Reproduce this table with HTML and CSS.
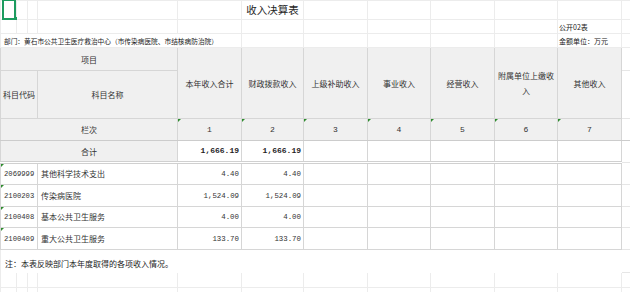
FILE: index.html
```html
<!DOCTYPE html>
<html>
<head>
<meta charset="utf-8">
<title>收入决算表</title>
<link rel="stylesheet" href="styles.css">
</head>
<body>
<table class="sheet">
  <colgroup>
    <col class="w16"><col class="w11"><col class="w10"><col class="w140">
    <col class="w64"><col class="w62"><col class="w64"><col class="w63">
    <col class="w64"><col class="w63"><col class="w64"><col class="w9">
  </colgroup>
  <tr class="h19 top">
    <td class="sel"></td><td></td><td></td><td></td><td></td>
    <td class="title">收入决算表</td>
    <td></td><td></td><td></td><td></td><td></td><td class="ext"></td>
  </tr>
  <tr class="h14 top">
    <td></td><td></td><td></td><td></td><td></td><td></td><td></td><td></td><td></td><td></td>
    <td class="small">公开02表</td><td class="ext"></td>
  </tr>
  <tr class="h14 top">
    <td colspan="5" class="dept">部门：黄石市公共卫生医疗救治中心（市传染病医院、市结核病防治院）</td>
    <td></td><td></td><td></td><td></td><td></td>
    <td class="small">金额单位：万元</td><td class="ext"></td>
  </tr>
  <tr class="h23">
    <td colspan="4" class="hd">项目</td>
    <td rowspan="2" class="hd">本年收入合计</td>
    <td rowspan="2" class="hd">财政拨款收入</td>
    <td rowspan="2" class="hd">上级补助收入</td>
    <td rowspan="2" class="hd">事业收入</td>
    <td rowspan="2" class="hd">经营收入</td>
    <td rowspan="2" class="hd">附属单位上缴收入</td>
    <td rowspan="2" class="hd">其他收入</td>
    <td class="ext"></td>
  </tr>
  <tr class="h48">
    <td colspan="3" class="hd">科目代码</td>
    <td class="hd">科目名称</td>
    <td class="ext"></td>
  </tr>
  <tr class="h22 idx">
    <td colspan="4" class="hd">栏次</td>
    <td class="hd idxnum tri">1</td>
    <td class="hd idxnum tri">2</td>
    <td class="hd idxnum tri">3</td>
    <td class="hd idxnum tri">4</td>
    <td class="hd idxnum tri">5</td>
    <td class="hd idxnum tri">6</td>
    <td class="hd idxnum tri">7</td>
    <td class="ext"></td>
  </tr>
  <tr class="h22 total">
    <td colspan="4" class="hd">合计</td>
    <td class="num bold">1,666.19</td>
    <td class="num bold">1,666.19</td>
    <td></td><td></td><td></td><td></td><td></td>
    <td class="ext"></td>
  </tr>
  <tr class="h22 row">
    <td colspan="3" class="code tri">2069999</td>
    <td class="name">其他科学技术支出</td>
    <td class="num">4.40</td>
    <td class="num">4.40</td>
    <td></td><td></td><td></td><td></td><td></td>
    <td class="ext"></td>
  </tr>
  <tr class="h22 row">
    <td colspan="3" class="code tri">2100203</td>
    <td class="name">传染病医院</td>
    <td class="num">1,524.09</td>
    <td class="num">1,524.09</td>
    <td></td><td></td><td></td><td></td><td></td>
    <td class="ext"></td>
  </tr>
  <tr class="h21 row">
    <td colspan="3" class="code tri">2100408</td>
    <td class="name">基本公共卫生服务</td>
    <td class="num">4.00</td>
    <td class="num">4.00</td>
    <td></td><td></td><td></td><td></td><td></td>
    <td class="ext"></td>
  </tr>
  <tr class="h22 row">
    <td colspan="3" class="code tri">2100409</td>
    <td class="name">重大公共卫生服务</td>
    <td class="num">133.70</td>
    <td class="num">133.70</td>
    <td></td><td></td><td></td><td></td><td></td>
    <td class="ext"></td>
  </tr>
  <tr class="h23 note">
    <td colspan="11" class="note-text">注：本表反映部门本年度取得的各项收入情况。</td>
    <td class="ext"></td>
  </tr>
  <tr class="h15 top">
    <td></td><td></td><td></td><td></td><td></td><td></td><td></td><td></td><td></td><td></td><td></td><td class="ext"></td>
  </tr>
  <tr class="h6 top">
    <td></td><td></td><td></td><td></td><td></td><td></td><td></td><td></td><td></td><td></td><td></td><td class="ext"></td>
  </tr>
</table>
</body>
</html>
```

FILE: styles.css
```css
html, body {
  margin: 0;
  padding: 0;
  background: #ffffff;
}

body {
  width: 630px;
  height: 292px;
  overflow: hidden;
  font-family: "Noto Sans CJK SC", "Noto Sans", sans-serif;
  color: #333333;
  text-spacing-trim: space-all;
  font-feature-settings: "chws" 0, "halt" 0;
}

.sheet {
  table-layout: fixed;
  border-collapse: collapse;
  width: 630px;
}

.w16 { width: 16px; }
.w11 { width: 11px; }
.w10 { width: 10px; }
.w140 { width: 140px; }
.w64 { width: 64px; }
.w62 { width: 62px; }
.w63 { width: 63px; }
.w9 { width: 9px; }

.h19 { height: 19px; }
.h14 { height: 14px; }
.h23 { height: 23px; }
.h48 { height: 48px; }
.h22 { height: 22px; }
.h21 { height: 21px; }
.h15 { height: 15px; }
.h6 { height: 6px; }

.sheet td {
  padding: 0 1px;
  border: 1px solid #d6d6d6;
  font-size: 8px;
  line-height: 10px;
  text-align: center;
  vertical-align: middle;
  white-space: nowrap;
  overflow: hidden;
}

.sheet tr.top td {
  border-color: #ececec;
}

.sheet td.ext {
  border-color: #e6e6e6;
}

.sheet td.sel {
  position: relative;
  overflow: visible;
}

.sheet td.sel::after {
  content: "";
  position: absolute;
  left: 1px;
  top: -2px;
  width: 10px;
  height: 17px;
  border: 2px solid #1c9b5f;
}

.sheet td.sel::before {
  content: "";
  position: absolute;
  right: -1px;
  bottom: -1px;
  width: 3px;
  height: 3px;
  background: #1c9b5f;
  z-index: 1;
}

.sheet td.title {
  font-size: 10.5px;
  line-height: 14px;
  color: #1e1e1e;
  overflow: visible;
}

.sheet td.small {
  text-align: left;
  font-size: 7px;
  padding-left: 1px;
  color: #222222;
  overflow: visible;
}

.sheet td.dept {
  text-align: left;
  font-size: 6.7px;
  padding-left: 3px;
  color: #222222;
  overflow: visible;
}

.sheet td.hd {
  background: #f0f0f0;
  color: #333333;
  white-space: normal;
  line-height: 15px;
}

.sheet td.idxnum {
  font-family: "Liberation Mono", monospace;
  font-size: 8px;
}

.sheet td.tri {
  position: relative;
}

.sheet td.tri::before {
  content: "";
  position: absolute;
  left: 0;
  top: 0;
  width: 0;
  height: 0;
  border-top: 3px solid #2e8b2e;
  border-right: 3px solid transparent;
}

.sheet tr.idx td {
  border-bottom-color: #cccccc;
}

.sheet tr.total td {
  border-bottom: 3px double #d0d0d0;
}

.sheet tr.total td.ext {
  border-bottom: 1px solid #e6e6e6;
}

.sheet td.num {
  font-family: "Liberation Mono", monospace;
  font-size: 7.4px;
  text-align: right;
  padding-right: 2px;
  color: #333333;
}

.sheet td.num.bold {
  font-weight: bold;
  font-size: 8px;
  color: #222222;
}

.sheet td.code {
  font-family: "Liberation Mono", monospace;
  font-size: 7.2px;
  text-align: left;
  padding-left: 3px;
}

.sheet td.name {
  text-align: left;
  padding-left: 3px;
}

.sheet tr.note td {
  border-bottom-color: transparent;
}

.sheet td.note-text {
  text-align: left;
  padding-left: 4px;
  padding-top: 5px;
  border-left-color: #ececec;
  border-right-color: transparent;
  color: #222222;
}

.sheet tr.note td.ext {
  border-bottom-color: #e6e6e6;
}
```
